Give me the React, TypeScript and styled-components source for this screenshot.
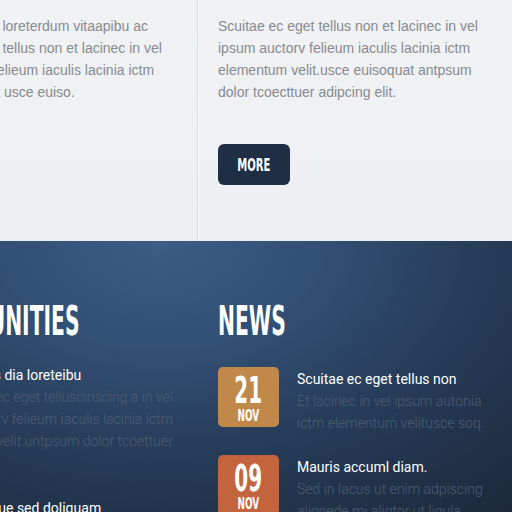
import styled, { createGlobalStyle } from 'styled-components'

const GlobalStyle = createGlobalStyle`
  html, body {
    margin: 0;
    padding: 0;
    width: 512px;
    height: 512px;
    overflow: hidden;
    background: #18222f;
  }
`

const Page = styled.div`
  width: 512px;
  height: 512px;
  overflow: hidden;
`

const Light = styled.section`
  height: 241px;
  background: linear-gradient(180deg, #f1f2f4 0%, #eeeff2 100%);
  overflow: hidden;
`

const Dark = styled.section`
  height: 271px;
  background: radial-gradient(
    ellipse 540px 360px at 160px 0px,
    #3c5d85 0%,
    #324f74 30%,
    #263c58 60%,
    #1b283a 100%
  );
  overflow: hidden;
`

const Row = styled.div`
  display: flex;
  margin-left: -124px;
  height: 100%;
`

const Col = styled.div<{ $divider?: boolean }>`
  width: 322px;
  flex: none;
  box-sizing: border-box;
  padding: 0 34px 0 20px;
  ${(p) =>
    p.$divider &&
    `border-right: 1px solid #dcdee1; box-shadow: 1px 0 0 #f7f8f9;`}
`

const LightCol = styled(Col)<{ $shift?: number }>`
  padding-top: 15px;
  padding-left: ${(p) => 20 + (p.$shift ?? 0)}px;
`

const Text = styled.p`
  margin: 0;
  font-family: 'Liberation Sans', Arial, sans-serif;
  font-size: 14px;
  line-height: 22px;
  color: #878a90;
  white-space: nowrap;
`

const Condensed = styled.span`
  display: inline-block;
  font-family: 'Liberation Sans Narrow', 'DejaVu Sans Condensed', sans-serif;
  font-weight: bold;
`

const MoreButton = styled.button`
  margin-top: 41px;
  width: 72px;
  height: 41px;
  border: none;
  border-radius: 6px;
  background: #1e2e45;
  color: #ffffff;
  padding: 0;
  cursor: pointer;
  display: flex;
  align-items: center;
  justify-content: center;

  ${Condensed} {
    font-size: 18px;
    transform: scaleX(0.62);
  }
`

const DarkCol = styled(Col)`
  padding-top: 59px;
`

const Heading = styled.h2`
  margin: 0;
  height: 42px;
  line-height: 42px;
  color: #ffffff;
  white-space: nowrap;

  ${Condensed} {
    font-size: 41px;
    transform: scaleX(0.55);
    transform-origin: left center;
  }
`

const Topics = styled.div`
  margin-top: 22px;
  margin-right: -9px;
  display: flex;
  flex-direction: column;
  gap: 45px;
`

const Topic = styled.div``

const ItemTitle = styled.div<{ $indent?: number }>`
  font-family: Roboto, 'Liberation Sans', sans-serif;
  font-size: 14px;
  line-height: 22px;
  color: #ffffff;
  white-space: nowrap;
  padding-left: ${(p) => p.$indent ?? 0}px;
`

const ItemText = styled.div<{ $right?: boolean }>`
  font-family: Roboto, 'Liberation Sans', sans-serif;
  font-weight: 300;
  font-size: 14px;
  line-height: 22px;
  color: #4d5d73;
  white-space: nowrap;
  ${(p) => p.$right && 'direction: rtl; text-align: right; unicode-bidi: plaintext;'}
`

const NewsList = styled.div`
  margin-top: 25px;
  display: flex;
  flex-direction: column;
  gap: 21px;
`

const NewsItem = styled.div`
  display: flex;
  gap: 18px;
`

const DateBox = styled.div<{ $color: string }>`
  width: 61px;
  height: 60px;
  flex: none;
  border-radius: 5px;
  background: ${(p) => p.$color};
  color: #ffffff;
  display: flex;
  flex-direction: column;
  align-items: center;
  justify-content: center;
`

const Day = styled.div`
  height: 34px;
  line-height: 34px;
  margin-top: 4px;
  ${Condensed} {
    font-size: 37px;
    transform: scaleX(0.6);
  }
`

const Month = styled.div`
  height: 16px;
  line-height: 16px;
  ${Condensed} {
    font-size: 15px;
    transform: scaleX(0.66);
  }
`

const NewsBody = styled.div`
  padding-top: 1px;
`

const news = [
  {
    day: '21',
    month: 'NOV',
    color: '#c08949',
    title: 'Scuitae ec eget tellus non',
    lines: ['Et lacinec in vel ipsum autonia', 'ictm elementum velitusce soq.'],
  },
  {
    day: '09',
    month: 'NOV',
    color: '#c4643f',
    title: 'Mauris accuml diam.',
    lines: ['Sed in lacus ut enim adpiscing', 'alignede mi aligtor ut ligula.'],
  },
]

export default function App() {
  return (
    <Page>
      <GlobalStyle />
      <Light>
        <Row>
          <LightCol $divider $shift={6}>
            <Text>
              Scuitae ec eget loreterdum vitaapibu ac
              <br />
              Scuitae ec eget tellus non et lacinec in vel
              <br />
              ipsum auctorv felieum iaculis lacinia ictm
              <br />
              elementum velit usce euiso.
            </Text>
          </LightCol>
          <LightCol>
            <Text>
              Scuitae ec eget tellus non et lacinec in vel
              <br />
              ipsum auctorv felieum iaculis lacinia ictm
              <br />
              elementum velit.usce euisoquat antpsum
              <br />
              dolor tcoecttuer adipcing elit.
            </Text>
            <MoreButton type="button">
              <Condensed>MORE</Condensed>
            </MoreButton>
          </LightCol>
        </Row>
      </Light>
      <Dark>
        <Row>
          <DarkCol>
            <Heading>
              <Condensed>OPPORTUNITIES</Condensed>
            </Heading>
            <Topics>
              <Topic>
                <ItemTitle $indent={10}>Nunc ut mauris dia loreteibu</ItemTitle>
                <ItemText $right>Scuitae ec eget telluscinscing a in vel</ItemText>
                <ItemText $right>ipsum auctorv felieum iaculis lacinia ictm</ItemText>
                <ItemText $right>elementum velit.untpsum dolor tcoettuer</ItemText>
              </Topic>
              <Topic>
                <ItemTitle $indent={10}>Mauris ut aliquue sed doliquam</ItemTitle>
                <ItemText $right>Sed in lacus ut enim adpiscing aliqu</ItemText>
              </Topic>
            </Topics>
          </DarkCol>
          <DarkCol>
            <Heading>
              <Condensed>NEWS</Condensed>
            </Heading>
            <NewsList>
              {news.map((n) => (
                <NewsItem key={n.day}>
                  <DateBox $color={n.color}>
                    <Day>
                      <Condensed>{n.day}</Condensed>
                    </Day>
                    <Month>
                      <Condensed>{n.month}</Condensed>
                    </Month>
                  </DateBox>
                  <NewsBody>
                    <ItemTitle>{n.title}</ItemTitle>
                    {n.lines.map((l) => (
                      <ItemText key={l}>{l}</ItemText>
                    ))}
                  </NewsBody>
                </NewsItem>
              ))}
            </NewsList>
          </DarkCol>
        </Row>
      </Dark>
    </Page>
  )
}
